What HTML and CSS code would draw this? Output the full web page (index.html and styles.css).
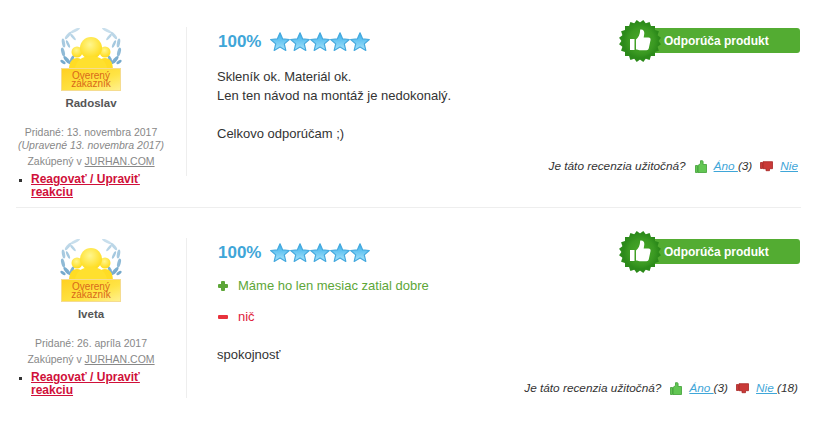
FILE: index.html
```html
<!DOCTYPE html>
<html lang="sk">
<head>
<meta charset="utf-8">
<title>Recenzie</title>
<link rel="stylesheet" href="styles.css">
</head>
<body>
<svg class="defs" width="0" height="0" aria-hidden="true">
  <defs>
    <linearGradient id="starFill" x1="0" y1="0" x2="0" y2="1">
      <stop offset="0" stop-color="#35aeea"/>
      <stop offset="1" stop-color="#a8e4fb"/>
    </linearGradient>
    <radialGradient id="sealFill" cx="0.5" cy="0.45" r="0.6">
      <stop offset="0" stop-color="#4aa82a"/>
      <stop offset="0.7" stop-color="#3b9a22"/>
      <stop offset="1" stop-color="#2c8a1a"/>
    </radialGradient>
    <radialGradient id="headFill" cx="0.45" cy="0.35" r="0.7">
      <stop offset="0" stop-color="#fff68e"/>
      <stop offset="1" stop-color="#ffd90f"/>
    </radialGradient>
    <linearGradient id="plateFill" x1="0" y1="0" x2="1" y2="1">
      <stop offset="0" stop-color="#ffcf20"/>
      <stop offset="0.6" stop-color="#ffe445"/>
      <stop offset="1" stop-color="#fff191"/>
    </linearGradient>
    <linearGradient id="leafFill" gradientUnits="userSpaceOnUse" x1="0" y1="0" x2="0" y2="38">
      <stop offset="0" stop-color="#cfe3ef"/>
      <stop offset="1" stop-color="#6ba3c8"/>
    </linearGradient>
    <symbol id="star" viewBox="0 0 20 20">
      <path d="M10 .8l2.700 6.100 6.600.6-5 4.400 1.500 6.500L10 15.100l-5.800 3.300 1.500-6.500-5-4.400 6.600-.6z" fill="url(#starFill)" stroke="#45a9de" stroke-width="1.200" stroke-linejoin="round"/>
    </symbol>
    <g id="laurel" fill="url(#leafFill)">
      <ellipse cx="15" cy="2.500" rx="5.500" ry="1.300" transform="rotate(-28 15 2.500)"/>
      <ellipse cx="13" cy="9" rx="4" ry="1.300" transform="rotate(50 13 9)"/>
      <ellipse cx="8" cy="7.500" rx="4.500" ry="1.500" transform="rotate(-50 8 7.500)"/>
      <ellipse cx="8" cy="16" rx="4" ry="1.300" transform="rotate(65 8 16)"/>
      <ellipse cx="3.500" cy="15" rx="4.500" ry="1.600" transform="rotate(80 3.500 15)"/>
      <ellipse cx="3" cy="24" rx="4.500" ry="1.700" transform="rotate(75 3 24)"/>
      <ellipse cx="7" cy="32" rx="5" ry="1.800" transform="rotate(50 7 32)"/>
      <ellipse cx="3" cy="34" rx="3" ry="1.400" transform="rotate(35 3 34)"/>
      <ellipse cx="12" cy="31" rx="4" ry="1.500" transform="rotate(-65 12 31)"/>
    </g>
    <symbol id="badge" viewBox="0 0 62 64">
      <use href="#laurel"/>
      <use href="#laurel" transform="translate(62 0) scale(-1 1)"/>
      <circle cx="17" cy="24" r="5.500" fill="url(#headFill)"/>
      <circle cx="45" cy="24" r="5.500" fill="url(#headFill)"/>
      <path d="M9 42c0-8 3-12 8-12s8 4 8 12zM37 42c0-8 3-12 8-12s8 4 8 12z" fill="#ffdc25"/>
      <circle cx="31" cy="20" r="11" fill="url(#headFill)"/>
      <path d="M15 42c0-9 7-14 16-14s16 5 16 14z" fill="#ffe02e"/>
      <rect x="1.500" y="40.500" width="59" height="22" fill="url(#plateFill)" stroke="#f5dc90"/>
      <text x="31" y="51" class="badge-text">Overený</text>
      <text x="31" y="59" class="badge-text">zákazník</text>
    </symbol>
    <symbol id="seal" viewBox="0 0 44 44">
      <g fill="url(#sealFill)">
        <rect x="7" y="7" width="30" height="30"/>
        <rect x="7" y="7" width="30" height="30" transform="rotate(18 22 22)"/>
        <rect x="7" y="7" width="30" height="30" transform="rotate(36 22 22)"/>
        <rect x="7" y="7" width="30" height="30" transform="rotate(54 22 22)"/>
        <rect x="7" y="7" width="30" height="30" transform="rotate(72 22 22)"/>
      </g>
      <path fill="#fff" d="M12 20h4.500v11H12zM18 20.500c2.500-2 4-5 4.200-10 3-.5 4.300 1.300 4.100 4l-.6 4h4.800c1.800 0 2.300 1.400 2 2.700l-1.700 8.100c-.3 1.300-1 1.900-2.300 1.900H21.500c-1.500 0-2-.7-3.500-.7z"/>
    </symbol>
    <symbol id="thumb-up" viewBox="0 0 12 13">
      <path fill="#62c653" stroke="#3f9f35" stroke-width=".8" d="M.5 5.500h2v7h-2zM3 5.500l2.500-2V.7h2l.6 1v2.800h3.400v8H3z"/>
    </symbol>
    <symbol id="thumb-down" viewBox="0 0 13 11">
      <path fill="#c93a38" stroke="#a82624" stroke-width=".8" d="M.5 1.500h2v6h-2zM3 .7h9.500v7H9.500v2H6v-2H3z"/>
    </symbol>
  </defs>
</svg>

<main class="reviews">
  <article class="review review-first">
    <aside class="author">
      <svg class="badge"><use href="#badge"/></svg>
      <div class="name">Radoslav</div>
      <div class="dates">
        <div>Pridané: 13. novembra 2017</div>
        <div class="edited">(Upravené 13. novembra 2017)</div>
      </div>
      <div class="bought">Zakúpený v <a href="#">JURHAN.COM</a></div>
      <ul class="actions"><li><a href="#">Reagovať / Upraviť reakciu</a></li></ul>
    </aside>
    <section class="content">
      <header class="head">
        <div class="score">
          <span class="pct">100%</span>
          <span class="stars">
            <svg class="star"><use href="#star"/></svg><svg class="star"><use href="#star"/></svg><svg class="star"><use href="#star"/></svg><svg class="star"><use href="#star"/></svg><svg class="star"><use href="#star"/></svg>
          </span>
        </div>
        <div class="recommend">
          <svg class="seal"><use href="#seal"/></svg>
          <span class="recommend-label">Odporúča produkt</span>
        </div>
      </header>
      <div class="text text-first">
        <p>Skleník ok. Materiál ok.<br>Len ten návod na montáž je nedokonalý.</p>
        <p>Celkovo odporúčam ;)</p>
      </div>
      <footer class="useful">
        <span>Je táto recenzia užitočná?</span>
        <svg class="thumb-up"><use href="#thumb-up"/></svg>
        <span><a href="#">Áno </a>(3)</span>
        <svg class="thumb-down"><use href="#thumb-down"/></svg>
        <a href="#">Nie</a>
      </footer>
    </section>
  </article>

  <article class="review">
    <aside class="author">
      <svg class="badge"><use href="#badge"/></svg>
      <div class="name">Iveta</div>
      <div class="dates">
        <div>Pridané: 26. apríla 2017</div>
      </div>
      <div class="bought">Zakúpený v <a href="#">JURHAN.COM</a></div>
      <ul class="actions"><li><a href="#">Reagovať / Upraviť reakciu</a></li></ul>
    </aside>
    <section class="content">
      <header class="head">
        <div class="score">
          <span class="pct">100%</span>
          <span class="stars">
            <svg class="star"><use href="#star"/></svg><svg class="star"><use href="#star"/></svg><svg class="star"><use href="#star"/></svg><svg class="star"><use href="#star"/></svg><svg class="star"><use href="#star"/></svg>
          </span>
        </div>
        <div class="recommend">
          <svg class="seal"><use href="#seal"/></svg>
          <span class="recommend-label">Odporúča produkt</span>
        </div>
      </header>
      <div class="text text-second">
        <div class="pro"><span class="plus"></span>Máme ho len mesiac zatial dobre</div>
        <div class="con"><span class="minus"></span>nič</div>
        <p>spokojnosť</p>
      </div>
      <footer class="useful">
        <span>Je táto recenzia užitočná?</span>
        <svg class="thumb-up"><use href="#thumb-up"/></svg>
        <span><a href="#">Áno </a>(3)</span>
        <svg class="thumb-down"><use href="#thumb-down"/></svg>
        <span><a href="#">Nie </a>(18)</span>
      </footer>
    </section>
  </article>
</main>
</body>
</html>
```

FILE: styles.css
```css
* { box-sizing: border-box; }

html, body { margin: 0; padding: 0; background: #fff; }

body {
  font-family: "Liberation Sans", Arial, sans-serif;
  font-size: 13px;
  color: #333;
  width: 815px;
  height: 425px;
  overflow: hidden;
}

.defs { position: absolute; }

.badge-text {
  font-family: "Liberation Sans", Arial, sans-serif;
  font-size: 10px;
  fill: #d8681a;
  text-anchor: middle;
}

.reviews { margin: 0 14px 0 16px; padding-top: 27px; }

.review { display: flex; align-items: flex-start; }

.review-first {
  height: 181px;
  border-bottom: 1px solid #eee;
  margin-bottom: 30px;
}

.author { width: 150px; text-align: center; font-size: 10.500px; color: #888; flex: none; }

.badge { display: block; width: 62px; height: 64px; margin: 1px 0 0 44px; }

.name { font-weight: 700; font-size: 11.500px; line-height: 14px; color: #555; margin-top: 4px; }

.dates { margin-top: 16px; line-height: 13px; }

.edited { font-style: italic; }

.bought { margin-top: 2px; line-height: 14px; }

.bought a { color: #888; }

.actions {
  margin: 5px 0 0;
  padding: 0 0 0 15px;
  list-style: square;
  text-align: left;
  color: #333;
  font-size: 12px;
  line-height: 13px;
}

.actions li::marker { font-size: 9px; }

.actions a { color: #d0103a; font-weight: 700; }

.content {
  flex: 1;
  margin-left: 20px;
  border-left: 1px solid #eee;
  padding-left: 30px;
  display: flex;
  flex-direction: column;
}

.head { display: flex; justify-content: space-between; align-items: flex-start; height: 33px; }

.score { display: flex; align-items: center; height: 30px; margin-left: 1px; }

.pct { color: #3fa6d8; font-weight: 700; font-size: 17px; margin-right: 9px; }

.stars { display: flex; }

.star { display: block; width: 20px; height: 20px; }

.recommend {
  position: relative;
  width: 160px;
  height: 25px;
  margin: 1px 1px 0 0;
  background: #53ac32;
  border-radius: 3px;
  display: flex;
  align-items: center;
  padding-left: 24px;
}

.seal { position: absolute; left: -22px; top: -9px; width: 44px; height: 44px; }

.recommend-label { color: #fff; font-weight: 700; font-size: 12px; }

.text { line-height: 19px; color: #333; }

.text p { margin: 0; }

.text-first { margin-top: 7px; height: 89px; }

.text-first p + p { margin-top: 19px; }

.text-second { margin-top: 5px; height: 102px; }

.pro { color: #5da638; display: flex; align-items: center; }

.con { color: #e0223c; display: flex; align-items: center; margin-top: 12px; }

.text-second p { margin-top: 19px; }

.plus, .minus { position: relative; display: block; width: 10px; height: 10px; margin: 0 10px 0 1px; flex: none; }

.plus::before, .plus::after, .minus::before { content: ""; position: absolute; border-radius: 1px; }

.plus::before { left: 0; top: 3px; width: 10px; height: 4px; background: #5da638; }

.plus::after { left: 3px; top: 0; width: 4px; height: 10px; background: #5da638; }

.minus::before { left: 0; top: 3px; width: 10px; height: 4px; background: #e8323c; }

.useful {
  display: flex;
  justify-content: flex-end;
  align-items: center;
  height: 20px;
  padding-right: 3px;
  font-style: italic;
  font-size: 11.800px;
  color: #333;
}

.useful a { color: #3fa6d8; }

.thumb-up { width: 12px; height: 13px; margin: 0 7px 0 9px; }

.thumb-down { width: 13px; height: 11px; margin: 0 7px 0 8px; }
```
